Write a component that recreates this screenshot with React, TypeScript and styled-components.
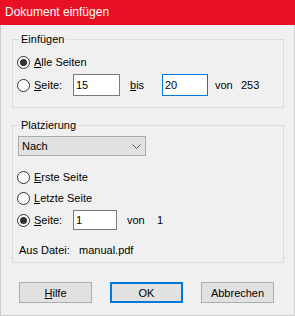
import React from "react";
import styled, { createGlobalStyle } from "styled-components";

const Global = createGlobalStyle`
  html, body { margin: 0; padding: 0; background: #f0f0f0; }
  body { font-family: "Liberation Sans", Arial, sans-serif; font-size: 11px; color: #000; }
  * { box-sizing: border-box; }
`;

const Window = styled.div`
  width: 295px;
  height: 316px;
  display: flex;
  flex-direction: column;
  background: #f0f0f0;
`;

const TitleBar = styled.div`
  height: 25px;
  flex: none;
  background: #e81123;
  color: #fff;
  font-size: 12px;
  line-height: 25px;
  padding-left: 5px;
  white-space: nowrap;
`;

const Body = styled.div`
  flex: 1;
  display: flex;
  flex-direction: column;
  border: 1px solid #cccccc;
  border-top: none;
  padding: 7px 10px 0 11px;
`;

const Group = styled.fieldset<{ $mt?: number; $pt: number; $pb: number }>`
  margin: ${(p) => p.$mt ?? 0}px 0 0 0;
  border: 1px solid #dcdcdc;
  padding: ${(p) => p.$pt}px 4px ${(p) => p.$pb}px 4px;
  min-width: 0;
  display: flex;
  flex-direction: column;
`;

const Legend = styled.legend`
  margin-left: 2px;
  padding: 0 2px;
  height: 15px;
  line-height: 15px;
  font-size: 11px;
`;

const Row = styled.div<{ $h: number; $mt?: number }>`
  display: flex;
  align-items: center;
  height: ${(p) => p.$h}px;
  margin-top: ${(p) => p.$mt ?? 0}px;
  white-space: nowrap;
`;

const RadioLabel = styled.label<{ $w?: number }>`
  display: flex;
  align-items: center;
  gap: 4px;
  width: ${(p) => (p.$w ? `${p.$w}px` : "auto")};
  flex: none;
`;

const RadioDot = styled.span<{ $checked?: boolean }>`
  width: 13px;
  height: 13px;
  border-radius: 50%;
  border: 1px solid #333;
  background: #fff;
  position: relative;
  flex: none;
  &::after {
    content: "";
    display: ${(p) => (p.$checked ? "block" : "none")};
    position: absolute;
    left: 2px;
    top: 2px;
    width: 7px;
    height: 7px;
    border-radius: 50%;
    background: #333;
  }
`;

const U = styled.span`
  text-decoration: underline;
  text-underline-offset: 1px;
`;

const TextInput = styled.input<{ $w: number; $h: number; $focus?: boolean }>`
  width: ${(p) => p.$w}px;
  height: ${(p) => p.$h}px;
  border: 1px solid ${(p) => (p.$focus ? "#0078d7" : "#7a7a7a")};
  background: #fff;
  padding: 0 0 0 2px;
  margin: 0;
  font-family: "Liberation Sans", Arial, sans-serif;
  font-size: 11px;
  color: #000;
  outline: none;
  flex: none;
`;

const Cell = styled.span<{ $w?: number; $ml?: number }>`
  display: inline-block;
  width: ${(p) => (p.$w ? `${p.$w}px` : "auto")};
  margin-left: ${(p) => p.$ml ?? 0}px;
  flex: none;
`;

const Dropdown = styled.div`
  margin-top: 0;
  margin-left: 1px;
  width: 128px;
  height: 20px;
  background: #e1e1e1;
  border: 1px solid #adadad;
  display: flex;
  align-items: center;
  justify-content: space-between;
  padding: 0 4px 0 3px;
`;

const ButtonRow = styled.div`
  display: flex;
  gap: 18px;
  margin: 19px 0 0 7px;
`;

const Button = styled.div<{ $default?: boolean }>`
  width: 73px;
  height: 21px;
  background: #e1e1e1;
  border: ${(p) => (p.$default ? "2px solid #0078d7" : "1px solid #adadad")};
  display: flex;
  align-items: center;
  justify-content: center;
  font-size: 11px;
`;

const Chevron = () => (
  <svg width="9" height="5" viewBox="0 0 9 5">
    <path d="M0.5 0.5 L4.5 4.5 L8.5 0.5" fill="none" stroke="#555" strokeWidth="1" />
  </svg>
);

export default function App() {
  return (
    <>
      <Global />
      <Window>
        <TitleBar>Dokument einfügen</TitleBar>
        <Body>
          <Group $pt={5} $pb={11}>
            <Legend>Einfügen</Legend>
            <Row $h={20}>
              <RadioLabel>
                <RadioDot $checked />
                <span>
                  <U>A</U>lle Seiten
                </span>
              </RadioLabel>
            </Row>
            <Row $h={22} $mt={2}>
              <RadioLabel $w={56}>
                <RadioDot />
                <span>
                  <U>S</U>eite:
                </span>
              </RadioLabel>
              <TextInput $w={47} $h={22} defaultValue="15" readOnly />
              <Cell $w={32} $ml={10}>
                <U>b</U>is
              </Cell>
              <TextInput $w={46} $h={22} $focus defaultValue="20" readOnly />
              <Cell $w={26} $ml={7}>von</Cell>
              <Cell>253</Cell>
            </Row>
          </Group>

          <Group $mt={10} $pt={3} $pb={2}>
            <Legend>Platzierung</Legend>
            <Dropdown>
              <span>Nach</span>
              <Chevron />
            </Dropdown>
            <Row $h={20} $mt={11}>
              <RadioLabel>
                <RadioDot />
                <span>
                  <U>E</U>rste Seite
                </span>
              </RadioLabel>
            </Row>
            <Row $h={20} $mt={1}>
              <RadioLabel>
                <RadioDot />
                <span>
                  <U>L</U>etzte Seite
                </span>
              </RadioLabel>
            </Row>
            <Row $h={20} $mt={2}>
              <RadioLabel $w={56}>
                <RadioDot $checked />
                <span>
                  <U>S</U>eite:
                </span>
              </RadioLabel>
              <TextInput $w={44} $h={20} defaultValue="1" readOnly />
              <Cell $w={30} $ml={10}>von</Cell>
              <Cell>1</Cell>
            </Row>
            <Row $h={20} $mt={10}>
              <Cell $w={60} $ml={2}>Aus Datei:</Cell>
              <Cell>manual.pdf</Cell>
            </Row>
          </Group>

          <ButtonRow>
            <Button>
              <span>
                <U>H</U>ilfe
              </span>
            </Button>
            <Button $default>OK</Button>
            <Button>Abbrechen</Button>
          </ButtonRow>
        </Body>
      </Window>
    </>
  );
}
